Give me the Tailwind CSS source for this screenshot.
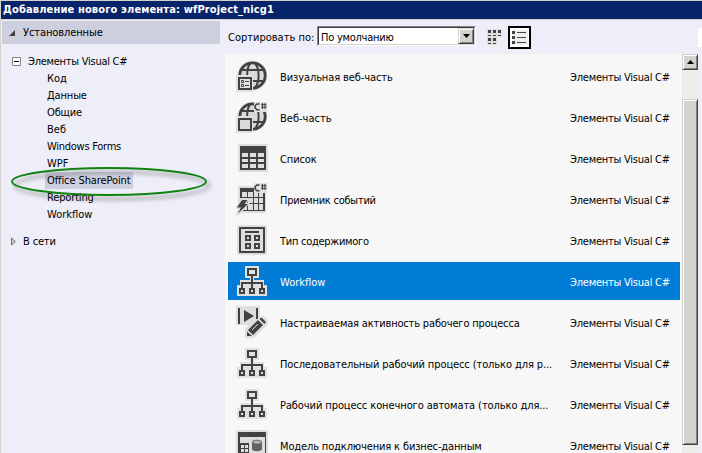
<!DOCTYPE html>
<html lang="ru">
<head>
<meta charset="utf-8">
<title>Добавление нового элемента</title>
<script src="https://cdn.jsdelivr.net/npm/@tailwindcss/browser@4"></script>
</head>
<body class="w-[702px] h-[453px] overflow-hidden bg-[#eeeef8] font-['DejaVu_Sans_Condensed','DejaVu_Sans',sans-serif] text-[11px] leading-[17px] text-black whitespace-nowrap">
<svg class="hidden">
  <defs>
    <symbol id="globe" viewBox="0 0 30 30">
      <circle cx="15.5" cy="14.5" r="15" fill="#e0e0e0"/>
      <circle cx="15.5" cy="14.5" r="12.7" fill="#d9d9d9" stroke="#424242" stroke-width="2.8"/>
      <path d="M4 9H27M3 20H28M13.500 2C9 7 9 22 13.500 27M17.500 2C23 7 23 22 17.500 27" fill="none" stroke="#424242" stroke-width="2"/>
    </symbol>
    <symbol id="csharp" viewBox="0 0 13 10">
      <path d="M0 0H13V10H0Z" fill="#e0e0e0"/>
      <path d="M5.5 2H3L1.2 3.5V6L3 7.8H5.5" fill="none" stroke="#424242" stroke-width="1.6"/>
      <path d="M8.5 1V7M11 1V7M7 2.7H12.5M7 5.2H12.5" stroke="#424242"/>
    </symbol>
    <symbol id="flow" viewBox="0 0 30 30">
      <path d="M8 0H22V12H17V14H27V19H30V30H0V19H3V14H13V12H8Z" fill="#e0e0e0"/>
      <path d="M11 3H19V9H11Z" fill="none" stroke="#424242" stroke-width="2"/>
      <path d="M15 10V22M5 22V17H25V22" fill="none" stroke="#424242" stroke-width="2"/>
      <path d="M3 23H7V27H3ZM13 23H17V27H13ZM23 23H27V27H23Z" fill="#e0e0e0" stroke="#424242" stroke-width="2"/>
    </symbol>
  </defs>
</svg>
<div class="flex h-full flex-col border-l border-[#d6d3ce]">
  <header class="h-5 shrink-0 border-y border-[#d6d3ce] bg-[#08246b] pl-[2px] font-bold leading-[18px] tracking-[0.14px] text-white">Добавление нового элемента: wfProject_nicg1</header>
  <div class="flex min-h-0 flex-1">
    <nav class="w-[224px] shrink-0 pl-px pt-px">
      <div class="flex h-[23px] w-[218px] items-center bg-[#cecfde] pl-[7px]">
        <svg class="mr-2 h-[6px] w-[6px]" viewBox="0 0 6 6"><path d="M6 0V6H0Z" fill="#424242"/></svg><span class="tracking-[-0.1px]">Установленные</span>
      </div>
      <div class="mt-[9px] flex h-[17px] items-center pl-[10px]">
        <svg class="mr-[7px] h-[9px] w-[9px]" viewBox="0 0 9 9"><path d="M.5 .5H8.5V8.5H.5Z" fill="#fff" stroke="#848284"/><path d="M2 4.5H7" stroke="#000"/></svg><span class="tracking-[-0.26px]">Элементы Visual C#</span>
      </div>
      <ul class="pl-[43px]">
        <li class="h-[17px] pl-[2px]">Код</li>
        <li class="h-[17px] pl-[2px] tracking-[-0.15px]">Данные</li>
        <li class="h-[17px] pl-[2px] tracking-[-0.15px]">Общие</li>
        <li class="h-[17px] pl-[2px]">Веб</li>
        <li class="h-[17px] pl-[2px] tracking-[-0.26px]">Windows Forms</li>
        <li class="h-[17px] pl-[2px]">WPF</li>
        <li class="h-[17px] w-[88px] bg-[#cecfde] pl-[2px] tracking-[-0.1px]">Office SharePoint</li>
        <li class="h-[17px] pl-[2px] tracking-[-0.15px]">Reporting</li>
        <li class="h-[17px] pl-[2px]">Workflow</li>
      </ul>
      <div class="mt-[10px] flex h-[17px] items-center pl-[9px]">
        <svg class="mr-[7px] h-[9px] w-[5px]" viewBox="0 0 5 9"><path d="M.5 1L4.3 4.5L.5 8Z" fill="#ccc" stroke="#737373"/></svg><span class="tracking-[-0.15px]">В сети</span>
      </div>
    </nav>
    <main class="flex min-w-0 flex-1 flex-col">
      <div class="flex h-[34px] shrink-0 items-start">
        <div class="ml-[3px] mt-[9px] w-[89px]">Сортировать по:</div>
        <div class="mt-[6px] flex h-5 w-[159px] border border-b-white border-l-[#848284] border-r-white border-t-[#848284] bg-white">
          <div class="flex flex-1 border border-b-[#d6d3ce] border-l-[#424142] border-r-[#d6d3ce] border-t-[#424142]">
            <span class="flex-1 pl-[2px] pt-px leading-[17px] tracking-[-0.25px]">По умолчанию</span>
            <div class="flex h-4 w-4 items-center justify-center border border-b-[#424142] border-l-[#d6d3ce] border-r-[#424142] border-t-[#d6d3ce] bg-[#d6d3ce] shadow-[inset_1px_1px_#fff,inset_-1px_-1px_#848284]">
              <svg class="h-1 w-[7px]" viewBox="0 0 7 4"><path d="M0 0H7L3.5 4Z"/></svg>
            </div>
          </div>
        </div>
        <svg class="ml-[11px] mt-[9px] h-4 w-[15px]" viewBox="0 0 15 16"><path d="M0 0H15V8H10V16H0Z" fill="#dedede"/><path d="M1 1h3v3h-3zM6 1h3v3h-3zM11 1h3v3h-3zM1 6h3v1h-3zM6 6h3v1h-3zM11 6h3v1h-3zM1 9h3v3h-3zM6 9h3v3h-3zM1 14h3v1h-3zM6 14h3v1h-3z" fill="#424242"/></svg>
        <div class="ml-[6px] mt-[6px] flex h-[23px] w-[23px] items-center justify-center border-2 border-black bg-white">
          <svg class="h-[15px] w-[17px]" viewBox="0 0 17 15"><path d="M1 0H17V15H1Z" fill="#eee"/><path d="M1 1h3v3h-3zM1 6h3v3h-3zM1 11h3v3h-3zM6 2h9v1h-9zM6 7h9v1h-9zM6 12h9v1h-9z" fill="#424242"/></svg>
        </div>
        <div class="ml-auto mt-2 h-[19px] w-1 bg-white"></div>
      </div>
      <div class="flex min-h-0 flex-1">
        <div class="w-[457px] shrink-0 overflow-hidden bg-[#f7f7f7] pl-[3px] pt-[3px]">
          <div class="mb-[3px] flex h-[38px] w-[452px] items-center pl-[9px]">
            <svg class="mr-[13px] h-[30px] w-[30px] shrink-0 overflow-visible" viewBox="0 0 30 30"><use href="#globe" width="30" height="30"/><path d="M-1 14H16V31H-1Z" fill="#e0e0e0"/><path d="M2 17H14V28H2Z" fill="#e0e0e0" stroke="#424242" stroke-width="2"/><path d="M4.500 19.500h2v2h-2zM4.500 23.500h2v2h-2z" fill="none" stroke="#424242"/><path d="M8 20.500H12M8 24.500H12" stroke="#424242"/></svg>
            <span class="pt-[2px] tracking-[-0.1px]">Визуальная веб-часть</span><span class="ml-auto w-[110px] pt-[2px] tracking-[-0.23px]">Элементы Visual C#</span>
          </div>
          <div class="mb-[3px] flex h-[38px] w-[452px] items-center pl-[9px]">
            <svg class="mr-[13px] h-[30px] w-[30px] shrink-0 overflow-visible" viewBox="0 0 30 30"><use href="#globe" width="30" height="30"/><path d="M-1 14H16V31H-1Z" fill="#e0e0e0"/><path d="M2 17H14V28H2Z" fill="#d9d9d9" stroke="#424242" stroke-width="2"/><use href="#csharp" x="17" y="0" width="13" height="10"/></svg>
            <span class="pt-[2px]">Веб-часть</span><span class="ml-auto w-[110px] pt-[2px] tracking-[-0.23px]">Элементы Visual C#</span>
          </div>
          <div class="mb-[3px] flex h-[38px] w-[452px] items-center pl-[9px]">
            <svg class="mr-[13px] h-[30px] w-[30px] shrink-0 overflow-visible" viewBox="0 0 30 30"><path d="M1 1H31V29H1Z" fill="#dedede"/><path d="M3 3H29V27H3Z" fill="#424242"/><path d="M5 10h6v4h-6zM13 10h6v4h-6zM21 10h6v4h-6zM5 16h6v3h-6zM13 16h6v3h-6zM21 16h6v3h-6zM5 21h6v4h-6zM13 21h6v4h-6zM21 21h6v4h-6z" fill="#dedede"/></svg>
            <span class="pt-[2px] tracking-[-0.1px]">Список</span><span class="ml-auto w-[110px] pt-[2px] tracking-[-0.23px]">Элементы Visual C#</span>
          </div>
          <div class="mb-[3px] flex h-[38px] w-[452px] items-center pl-[9px]">
            <svg class="mr-[13px] h-[30px] w-[30px] shrink-0 overflow-visible" viewBox="0 0 30 30"><path d="M1 2H29V29H1Z" fill="#dedede"/><path d="M3 4H28V27H3Z" fill="#424242"/><path d="M5 8h5v5h-5zM11 8h5v5h-5zM17 8h4v5h-4zM22 8h4v5h-4zM5 14h5v5h-5zM11 14h5v5h-5zM17 14h4v5h-4zM22 14h4v5h-4zM5 20h5v6h-5zM11 20h5v6h-5zM17 20h4v6h-4zM22 20h4v6h-4z" fill="#dedede"/><path d="M3 14H13L10 19H13L2 31H-1V29L1 25H-1V23Z" fill="#dedede"/><path d="M5 16H10.500L7.500 20H11L1 29.500L4 23.500H0Z" fill="#424242"/><use href="#csharp" x="17" y="-1" width="13" height="10"/></svg>
            <span class="pt-[2px] tracking-[-0.25px]">Приемник событий</span><span class="ml-auto w-[110px] pt-[2px] tracking-[-0.23px]">Элементы Visual C#</span>
          </div>
          <div class="mb-[3px] flex h-[38px] w-[452px] items-center pl-[9px]">
            <svg class="mr-[13px] h-[30px] w-[30px] shrink-0" viewBox="0 0 30 30"><path d="M0 0H30V30H0Z" fill="#dedede"/><path d="M3 3H27V27H3Z" fill="none" stroke="#424242" stroke-width="2"/><path d="M8 7H22" stroke="#424242" stroke-width="2"/><path d="M9 11h4v4h-4zM18 11h4v4h-4zM9 19h4v4h-4zM18 19h4v4h-4z" fill="none" stroke="#424242" stroke-width="2"/></svg>
            <span class="pt-[2px] tracking-[-0.28px]">Тип содержимого</span><span class="ml-auto w-[110px] pt-[2px] tracking-[-0.23px]">Элементы Visual C#</span>
          </div>
          <div class="mb-[3px] flex h-[38px] w-[452px] items-center bg-[#007bd6] pl-[9px] text-white">
            <svg class="mr-[13px] h-[30px] w-[30px] shrink-0" viewBox="0 0 30 30"><use href="#flow" width="30" height="30"/></svg>
            <span class="pt-[2px]">Workflow</span><span class="ml-auto w-[110px] pt-[2px] tracking-[-0.23px]">Элементы Visual C#</span>
          </div>
          <div class="mb-[3px] flex h-[38px] w-[452px] items-center pl-[9px]">
            <svg class="mr-[13px] h-[30px] w-[30px] shrink-0 overflow-visible" viewBox="0 0 30 30"><path d="M-1 -1H23V10L27 9L31 14V17L17 31H8V22L12 18H-1Z" fill="#dedede"/><path d="M2 1V17M20 1V12" stroke="#424242" stroke-width="2"/><path d="M7 3L17 9L7 15Z" fill="#424242"/><path d="M21 13L26 18L16 28L11 23Z" fill="#424242"/><path d="M22.500 12L24.500 10.500L29 15L27.500 17ZM10 24.500L15 29H10Z" fill="#424242"/><path d="M15 23L21 17" stroke="#dedede"/></svg>
            <span class="pt-[2px] tracking-[-0.16px]">Настраиваемая активность рабочего процесса</span><span class="ml-auto w-[110px] pt-[2px] tracking-[-0.23px]">Элементы Visual C#</span>
          </div>
          <div class="mb-[3px] flex h-[38px] w-[452px] items-center pl-[9px]">
            <svg class="mr-[13px] h-[30px] w-[30px] shrink-0" viewBox="0 0 30 30"><use href="#flow" width="30" height="30"/></svg>
            <span class="pt-[2px] tracking-[-0.1px]">Последовательный рабочий процесс (только для р...</span><span class="ml-auto w-[110px] pt-[2px] tracking-[-0.23px]">Элементы Visual C#</span>
          </div>
          <div class="mb-[3px] flex h-[38px] w-[452px] items-center pl-[9px]">
            <svg class="mr-[13px] h-[30px] w-[30px] shrink-0" viewBox="0 0 30 30"><use href="#flow" width="30" height="30"/></svg>
            <span class="pt-[2px] tracking-[-0.09px]">Рабочий процесс конечного автомата (только для...</span><span class="ml-auto w-[110px] pt-[2px] tracking-[-0.23px]">Элементы Visual C#</span>
          </div>
          <div class="mb-[3px] flex h-[38px] w-[452px] items-center pl-[9px]">
            <svg class="mr-[13px] h-[30px] w-[30px] shrink-0 overflow-visible" viewBox="0 0 30 30"><path d="M-1 0H31V30H-1Z" fill="#dedede"/><path d="M1 2H29V30H28V7H3V30H1Z" fill="#424242"/><path d="M3 13H12V30H3Z" fill="#424242"/><path d="M4 15h3v3h-3zM8 15h3v3h-3zM4 19h3v3h-3zM8 19h3v3h-3z" fill="#dedede"/><path d="M15 12C15 9 25 9 25 12V19C25 22 15 22 15 19Z" fill="#636163"/><ellipse cx="20" cy="12" rx="4" ry="1.500" fill="#b5b5b5"/></svg>
            <span class="pt-[2px] tracking-[-0.14px]">Модель подключения к бизнес-данным</span><span class="ml-auto w-[110px] pt-[2px] tracking-[-0.23px]">Элементы Visual C#</span>
          </div>
        </div>
        <div class="flex w-4 flex-col bg-[#efebe7]">
          <div class="flex h-4 w-4 shrink-0 items-center justify-center border border-b-[#424142] border-l-[#d6d3ce] border-r-[#424142] border-t-[#d6d3ce] bg-[#d6d3ce] shadow-[inset_1px_1px_#fff,inset_-1px_-1px_#848284]">
            <svg class="h-1 w-[7px]" viewBox="0 0 7 4"><path d="M0 4H7L3.5 0Z"/></svg>
          </div>
          <div class="mt-[29px] h-[346px] border border-b-[#424142] border-l-[#d6d3ce] border-r-[#424142] border-t-[#d6d3ce] bg-[#d6d3ce] shadow-[inset_1px_1px_#fff,inset_-1px_-1px_#848284]"></div>
        </div>
      </div>
    </main>
  </div>
</div>
<svg class="absolute left-0 top-[160px] h-[45px] w-[220px] drop-shadow-[3px_4px_2px_rgba(0,0,0,0.4)]" viewBox="0 0 220 45"><ellipse cx="109" cy="21.500" rx="97" ry="13.500" fill="none" stroke="#108210" stroke-width="1.900"/></svg>
</body>
</html>
